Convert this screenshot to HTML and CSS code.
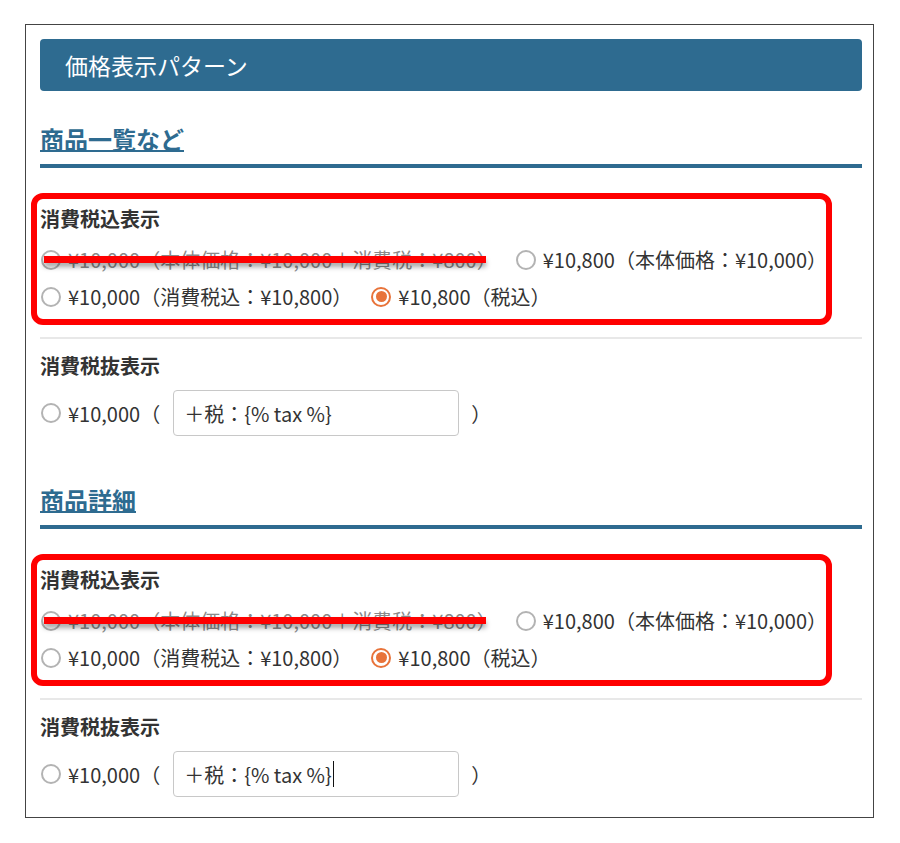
FILE: index.html
```html
<!DOCTYPE html>
<html lang="ja">
<head>
<meta charset="utf-8">
<title>価格表示パターン</title>
<link rel="stylesheet" href="styles.css">
</head>
<body>
<div class="frame">
  <div class="title">価格表示パターン</div>

  <section class="sec">
    <h2 class="sec-title"><span>商品一覧など</span></h2>
    <div class="incl">
      <div class="incl-inner">
        <h3 class="grp-title">消費税込表示</h3>
        <div class="options">
          <label class="opt opt-off"><span class="radio"></span><span class="struck">¥10,000（本体価格：¥10,000＋消費税：¥800）</span><span class="strike-mark"></span></label>
          <label class="opt"><span class="radio"></span><span>¥10,800（本体価格：¥10,000）</span></label>
          <label class="opt"><span class="radio"></span><span>¥10,000（消費税込：¥10,800）</span></label>
          <label class="opt"><span class="radio radio-on"></span><span>¥10,800（税込）</span></label>
        </div>
        <div class="annot-box"></div>
      </div>
    </div>
    <div class="excl">
      <h3 class="grp-title">消費税抜表示</h3>
      <div class="excl-row">
        <span class="radio"></span><span class="excl-label">¥10,000（</span><span class="field"><span>＋税：{% tax %}</span></span><span>）</span>
      </div>
    </div>
  </section>

  <section class="sec sec-next">
    <h2 class="sec-title"><span>商品詳細</span></h2>
    <div class="incl">
      <div class="incl-inner">
        <h3 class="grp-title">消費税込表示</h3>
        <div class="options">
          <label class="opt opt-off"><span class="radio"></span><span class="struck">¥10,000（本体価格：¥10,000＋消費税：¥800）</span><span class="strike-mark"></span></label>
          <label class="opt"><span class="radio"></span><span>¥10,800（本体価格：¥10,000）</span></label>
          <label class="opt"><span class="radio"></span><span>¥10,000（消費税込：¥10,800）</span></label>
          <label class="opt"><span class="radio radio-on"></span><span>¥10,800（税込）</span></label>
        </div>
        <div class="annot-box"></div>
      </div>
    </div>
    <div class="excl">
      <h3 class="grp-title">消費税抜表示</h3>
      <div class="excl-row">
        <span class="radio"></span><span class="excl-label">¥10,000（</span><span class="field"><span>＋税：{% tax %}</span><span class="caret"></span></span><span>）</span>
      </div>
    </div>
  </section>
</div>
</body>
</html>
```

FILE: styles.css
```css
* { box-sizing: border-box; }

body {
  margin: 0;
  background: #fff;
  color: #333;
  font-family: "Noto Sans CJK JP", "Noto Sans", sans-serif;
}

.frame {
  margin: 24px 0 0 25px;
  width: 849px;
  border: 1px solid #444;
  padding: 14px 11px 20px 14px;
}

.title {
  height: 52px;
  background: #2e6b90;
  border-radius: 4px;
  color: #fff;
  font-size: 23px;
  display: flex;
  align-items: center;
  padding-left: 25px;
}

.sec { padding-top: 30px; }
.sec-next { padding-top: 46px; }

.sec-title {
  margin: 0;
  font-size: 24px;
  line-height: 36px;
  font-weight: bold;
  color: #2e6b90;
  padding-bottom: 7px;
  border-bottom: 4px solid #2e6b90;
}
.sec-title span { text-decoration: underline; text-decoration-thickness: 2px; }

.grp-title {
  margin: 0;
  font-size: 20px;
  line-height: 28px;
  font-weight: bold;
  color: #333;
}

.incl {
  padding-top: 37px;
  padding-bottom: 22px;
  border-bottom: 2px solid #e8e8e8;
}
.incl-inner { position: relative; }

.options {
  display: flex;
  flex-wrap: wrap;
  column-gap: 18px;
  margin-top: 8px;
}

.opt {
  position: relative;
  display: inline-flex;
  align-items: center;
  gap: 7px;
  font-size: 20px;
  line-height: 37px;
  color: #333;
}

.radio {
  flex: none;
  width: 20px;
  height: 20px;
  margin-left: 1px;
  border: 2px solid #b3b3b3;
  border-radius: 50%;
  background: #fff;
  position: relative;
}
.radio-on { border-color: #e8733a; }
.radio-on::after {
  content: "";
  position: absolute;
  left: 2.5px;
  top: 2.5px;
  width: 11px;
  height: 11px;
  border-radius: 50%;
  background: #e8733a;
}

.opt-off .struck {
  color: #8a8a8a;
}

.strike-mark {
  position: absolute;
  left: 4px;
  right: 11px;
  top: 15px;
  height: 7px;
  background: #ff0000;
  box-shadow: 0 4px 5px rgba(0, 0, 0, 0.35);
}

.annot-box {
  position: absolute;
  top: -12px;
  bottom: -10px;
  left: -9px;
  right: 30px;
  border: 6px solid #ff0000;
  border-radius: 12px;
  pointer-events: none;
}

.excl { padding-top: 13px; }

.excl-row {
  display: flex;
  align-items: center;
  margin-top: 10px;
  font-size: 20px;
  color: #333;
}
.excl-label { margin-left: 7px; }

.field {
  display: flex;
  align-items: center;
  width: 286px;
  height: 46px;
  margin: 0 12px 0 13px;
  padding-left: 10px;
  border: 1px solid #c8c8c8;
  border-radius: 4px;
  background: #fff;
}

.caret {
  display: inline-block;
  width: 1.5px;
  height: 26px;
  margin-left: 1px;
  background: #111;
}
```
